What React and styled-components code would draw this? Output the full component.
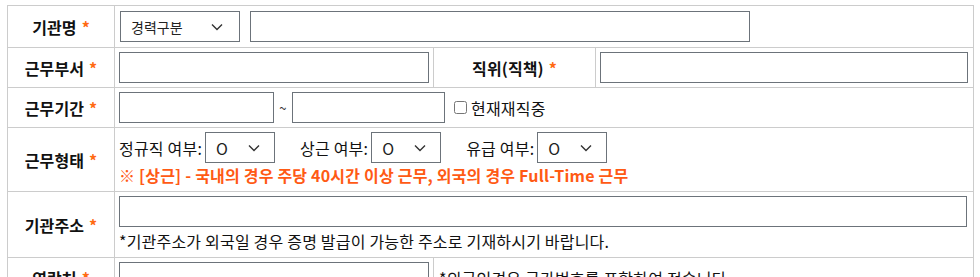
import React from "react"
import styled, { createGlobalStyle } from "styled-components"

const GlobalStyle = createGlobalStyle`
  body {
    margin: 0;
    background: #fff;
    font-family: "Noto Sans CJK KR", "Noto Sans", sans-serif;
    color: #222;
  }
`

const Page = styled.div`
  padding: 5px 0 0 7px;
`

const FormTable = styled.table`
  width: 966px;
  border-collapse: collapse;
  table-layout: fixed;
  font-size: 16px;
`

const Label = styled.th`
  border: 1px solid #cccccc;
  font-weight: 700;
  color: #111;
  text-align: center;
  vertical-align: middle;
  padding: 0;
  letter-spacing: 0.1px;
`

const Star = styled.span`
  color: #ff6a13;
  margin-left: 5px;
`

const Cell = styled.td`
  border: 1px solid #cccccc;
  padding: 4px;
  vertical-align: middle;
  letter-spacing: 0.2px;
`

const Line = styled.div`
  display: flex;
  align-items: center;
  gap: ${p => p.$gap || 0}px;
  min-height: 31px;
`

const TextInput = styled.div`
  box-sizing: border-box;
  width: ${p => p.$w}px;
  height: 31px;
  border: 1px solid #6c737a;
  background: #fff;
  flex: none;
`

const SelectBox = styled.div`
  box-sizing: border-box;
  width: ${p => p.$w}px;
  height: 31px;
  border: 1px solid #6c737a;
  background: #fff;
  display: flex;
  align-items: center;
  justify-content: space-between;
  padding: 0 ${p => p.$pr || 14}px 0 10px;
  font-size: ${p => p.$fs || 16}px;
  color: #222;
  letter-spacing: 0;
  flex: none;
`

const Tilde = styled.span`
  width: 18px;
  text-align: center;
  font-size: 13px;
  color: #333;
`

const CheckLabel = styled.label`
  display: flex;
  align-items: center;
  margin-left: 9px;
  color: #111;
  input {
    width: 13px;
    height: 13px;
    margin: 0 4px 0 0;
  }
`

const FieldName = styled.span`
  color: #111;
  margin-right: 3px;
  white-space: nowrap;
`

const Group = styled.div`
  display: flex;
  align-items: center;
  margin-right: 25px;
`

const Warning = styled.div`
  color: #ff5a14;
  font-weight: 700;
  margin-top: 1px;
  line-height: 23px;
`

const Note = styled.div`
  color: #111;
  line-height: 23px;
  margin-top: 3px;
`

const NoteCell = styled(Cell)`
  padding-left: 5px;
  color: #111;
`

const Chevron = () => (
  <svg width="12" height="8" viewBox="0 0 12 8" fill="none">
    <path d="M1 1.5L6 6.5L11 1.5" stroke="#333" strokeWidth="1.4" />
  </svg>
)

const YesNo = () => (
  <SelectBox $w={70} $pr={14}>
    <span>O</span>
    <Chevron />
  </SelectBox>
)

const App = () => (
  <Page>
    <GlobalStyle />
    <FormTable>
      <colgroup>
        <col style={{ width: 107 }} />
        <col style={{ width: 319 }} />
        <col style={{ width: 162 }} />
        <col style={{ width: 378 }} />
      </colgroup>
      <tbody>
        <tr style={{ height: 42 }}>
          <Label>기관명<Star>*</Star></Label>
          <Cell colSpan={3} style={{ paddingLeft: 5 }}>
            <Line $gap={10}>
              <SelectBox $w={120} $fs={14} $pr={16}>
                <span>경력구분</span>
                <Chevron />
              </SelectBox>
              <TextInput $w={500} />
            </Line>
          </Cell>
        </tr>
        <tr style={{ height: 40 }}>
          <Label>근무부서<Star>*</Star></Label>
          <Cell>
            <TextInput $w={310} />
          </Cell>
          <Label>직위(직책)<Star>*</Star></Label>
          <Cell>
            <TextInput $w={368} />
          </Cell>
        </tr>
        <tr style={{ height: 40 }}>
          <Label>근무기간<Star>*</Star></Label>
          <Cell colSpan={3}>
            <Line>
              <TextInput $w={155} />
              <Tilde>~</Tilde>
              <TextInput $w={153} />
              <CheckLabel>
                <input type="checkbox" />
                현재재직중
              </CheckLabel>
            </Line>
          </Cell>
        </tr>
        <tr style={{ height: 64 }}>
          <Label>근무형태<Star>*</Star></Label>
          <Cell colSpan={3}>
            <Line>
              <Group>
                <FieldName>정규직 여부:</FieldName>
                <YesNo />
              </Group>
              <Group>
                <FieldName>상근 여부:</FieldName>
                <YesNo />
              </Group>
              <Group>
                <FieldName>유급 여부:</FieldName>
                <YesNo />
              </Group>
            </Line>
            <Warning>※ [상근] - 국내의 경우 주당 40시간 이상 근무, 외국의 경우 Full-Time 근무</Warning>
          </Cell>
        </tr>
        <tr style={{ height: 64 }}>
          <Label>기관주소<Star>*</Star></Label>
          <Cell colSpan={3}>
            <TextInput $w={848} />
            <Note>*기관주소가 외국일 경우 증명 발급이 가능한 주소로 기재하시기 바랍니다.</Note>
          </Cell>
        </tr>
        <tr style={{ height: 40 }}>
          <Label>연락처<Star>*</Star></Label>
          <Cell>
            <TextInput $w={310} />
          </Cell>
          <NoteCell colSpan={2}>*외국인경우 국가번호를 포함하여 적습니다.</NoteCell>
        </tr>
      </tbody>
    </FormTable>
  </Page>
)

export default App
